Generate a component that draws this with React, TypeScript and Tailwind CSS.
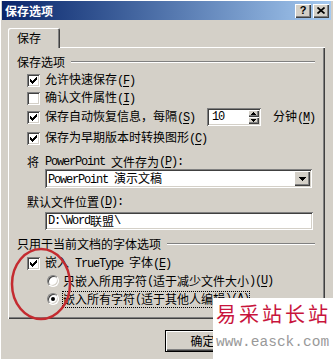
import React from 'react';

const mono = "font-['Liberation_Mono',monospace] tracking-[-1.2px] whitespace-pre";
const raised =
  'bg-[#d4d0c8] shadow-[inset_1px_1px_0_#fff,inset_-1px_-1px_0_#404040,inset_-2px_-2px_0_#808080]';
const sunken =
  'bg-white shadow-[inset_1px_1px_0_#808080,inset_-1px_-1px_0_#fff,inset_2px_2px_0_#404040,inset_-2px_-2px_0_#d4d0c8]';

// ascii runs are drawn half-width (like SimSun), "&X" underlines the mnemonic letter
function Txt({ s }: { s: string }) {
  const parts = s.split(/([\x20-\x7e]+)/).filter(Boolean);
  return (
    <>
      {parts.map((p, i) => {
        if (!/^[\x20-\x7e]+$/.test(p)) return <span key={i}>{p}</span>;
        const bits = p.split(/&(.)/);
        return (
          <span key={i} className={mono}>
            {bits.map((b, j) =>
              j % 2 ? (
                <span key={j} className="underline underline-offset-2">
                  {b}
                </span>
              ) : (
                b
              ),
            )}
          </span>
        );
      })}
    </>
  );
}

function Check({ on }: { on?: boolean }) {
  return (
    <span className={`flex h-[13px] w-[13px] shrink-0 items-center justify-center ${sunken}`}>
      {on && (
        <svg width="7" height="7" viewBox="0 0 7 7" shapeRendering="crispEdges">
          <path
            d="M0 2h1v3H0z M1 3h1v3H1z M2 4h1v3H2z M3 3h1v3H3z M4 2h1v3H4z M5 1h1v3H5z M6 0h1v3H6z"
            fill="#000"
          />
        </svg>
      )}
    </span>
  );
}

function Radio({ on }: { on?: boolean }) {
  return (
    <span className="flex h-[12px] w-[12px] shrink-0 items-center justify-center rounded-full border border-t-[#808080] border-l-[#808080] border-r-white border-b-white bg-white shadow-[inset_1px_1px_0_#404040,inset_-1px_-1px_0_#d4d0c8]">
      {on && <span className="h-[4px] w-[4px] rounded-full bg-black" />}
    </span>
  );
}

function Group({ s }: { s: string }) {
  return (
    <div className="mt-[6px] flex h-[16px] items-center">
      <span className="shrink-0 whitespace-nowrap">
        <Txt s={s} />
      </span>
      <div className="ml-[6px] h-[2px] flex-1 border-t border-b border-t-[#808080] border-b-white" />
    </div>
  );
}

function CheckRow({
  on,
  s,
  className = '',
  children,
}: {
  on?: boolean;
  s: string;
  className?: string;
  children?: React.ReactNode;
}) {
  return (
    <div className={`flex h-[18px] items-center pl-[10px] whitespace-nowrap ${className}`}>
      <Check on={on} />
      <span className="ml-[5px] shrink-0">
        <Txt s={s} />
      </span>
      {children}
    </div>
  );
}

function RadioRow({ on, s, focus }: { on?: boolean; s: string; focus?: boolean }) {
  return (
    <div className="flex h-[18px] items-center pl-[30px] whitespace-nowrap">
      <Radio on={on} />
      <span
        className={`ml-[3px] flex h-[17px] items-center border border-dotted ${
          focus ? 'border-black' : 'border-transparent'
        }`}
      >
        <Txt s={s} />
      </span>
    </div>
  );
}

export default function App() {
  return (
    <div className="relative h-[359px] w-[333px] overflow-hidden bg-[#d4d0c8] px-[2px] pt-[1px] font-['Noto_Sans_CJK_SC',sans-serif] text-[12px] leading-[14px] text-black shadow-[inset_1px_1px_0_#fff]">
      {/* title bar */}
      <div className="flex h-[19px] items-center bg-linear-to-r from-[#0a246a] to-[#a6caf0] pl-[3px] pr-[2px]">
        <span className="flex-1 font-bold text-white">保存选项</span>
        <div className={`flex h-[14px] w-[16px] items-center justify-center ${raised}`}>
          <span className="font-['Liberation_Sans',sans-serif] text-[11px] leading-none font-bold">?</span>
        </div>
        <div className={`ml-[2px] flex h-[14px] w-[16px] items-center justify-center ${raised}`}>
          <svg width="8" height="7" viewBox="0 0 8 7">
            <path d="M0.5 0.5L7.5 6.5M7.5 0.5L0.5 6.5" stroke="#000" strokeWidth="1.7" />
          </svg>
        </div>
      </div>

      <div className="px-[6px]">
        {/* tab */}
        <div className="relative z-10 mt-[8px] -mb-[1px] flex h-[20px] w-[52px] items-center rounded-t-[2px] bg-[#d4d0c8] pl-[9px] shadow-[inset_1px_1px_0_#fff,inset_-1px_0_0_#404040,inset_-2px_0_0_#808080]">
          保存
        </div>

        {/* tab page */}
        <div className="flex h-[272px] flex-col pt-[1px] pr-[10px] pl-[9px] shadow-[inset_1px_1px_0_#fff,inset_-1px_-1px_0_#404040,inset_-2px_-2px_0_#808080]">
          <Group s="保存选项" />
          <CheckRow on s="允许快速保存(&F)" className="mt-[1px]" />
          <CheckRow s="确认文件属性(&I)" />
          <CheckRow on s="保存自动恢复信息，每隔(&S)" className="h-[20px]">
            <div className={`ml-[12px] flex h-[18px] w-[54px] shrink-0 items-center pr-[2px] pl-[5px] ${sunken}`}>
              <span className={`flex-1 ${mono}`}>10</span>
              <div className="flex h-[14px] w-[11px] flex-col">
                <div className={`flex h-[7px] items-center justify-center ${raised}`}>
                  <svg width="5" height="3" viewBox="0 0 5 3" shapeRendering="crispEdges">
                    <polygon points="2.5,0 5,3 0,3" fill="#000" />
                  </svg>
                </div>
                <div className={`flex h-[7px] items-center justify-center ${raised}`}>
                  <svg width="5" height="3" viewBox="0 0 5 3" shapeRendering="crispEdges">
                    <polygon points="0,0 5,0 2.5,3" fill="#000" />
                  </svg>
                </div>
              </div>
            </div>
            <span className="ml-[12px] shrink-0">
              <Txt s="分钟(&M)" />
            </span>
          </CheckRow>
          <CheckRow on s="保存为早期版本时转换图形(&C)" className="mt-[2px]" />

          <div className="mt-[8px] flex h-[14px] items-center pl-[10px] whitespace-nowrap">
            <Txt s="将 PowerPoint 文件存为(&P):" />
          </div>
          <div className={`ml-[28px] flex h-[19px] w-[267px] items-center pr-[2px] pl-[3px] ${sunken}`}>
            <span className="flex-1 whitespace-nowrap">
              <Txt s="PowerPoint 演示文稿" />
            </span>
            <div className={`flex h-[15px] w-[16px] items-center justify-center ${raised}`}>
              <svg width="7" height="4" viewBox="0 0 7 4" shapeRendering="crispEdges">
                <polygon points="0,0 7,0 3.5,4" fill="#000" />
              </svg>
            </div>
          </div>

          <div className="mt-[7px] flex h-[14px] items-center pl-[10px] whitespace-nowrap">
            <Txt s="默认文件位置(&D):" />
          </div>
          <div className={`mt-[3px] ml-[28px] flex h-[18px] w-[268px] items-center pl-[3px] whitespace-nowrap ${sunken}`}>
            <Txt s={'D:\\Word联盟\\'} />
          </div>

          <Group s="只用于当前文档的字体选项" />
          <CheckRow on s="嵌入 TrueType 字体(&E)" className="mt-[2px]" />
          <RadioRow s="只嵌入所用字符(适于减少文件大小)(&U)" />
          <RadioRow on focus s="嵌入所有字符(适于其他人编辑)(&A)" />
        </div>

        {/* buttons (the second one sits under the watermark) */}
        <div className="mt-[11px] flex justify-end gap-[6px] pr-[4px]">
          <div className={`flex h-[22px] w-[75px] items-center justify-center border border-black ${raised}`}>
            确定
          </div>
          <div className={`h-[22px] w-[75px] ${raised}`} />
        </div>
      </div>

      {/* hand drawn red circle */}
      <svg className="pointer-events-none absolute top-0 left-0" width="333" height="359">
        <ellipse cx="41" cy="284" rx="29" ry="35" fill="none" stroke="#c42b30" strokeWidth="2.5" />
      </svg>

      {/* watermark */}
      <div className="absolute right-0 bottom-0 flex h-[61px] w-[120px] flex-col bg-white pt-[5px] pl-[3px]">
        <span className="text-[20px] leading-[22px] tracking-[3px] whitespace-nowrap text-[#c8143c]">易采站长站</span>
        <span className="mt-[10px] font-['Liberation_Mono',monospace] text-[14.5px] leading-[14px] whitespace-nowrap text-[#999]">
          www.easck.com
        </span>
      </div>
    </div>
  );
}
